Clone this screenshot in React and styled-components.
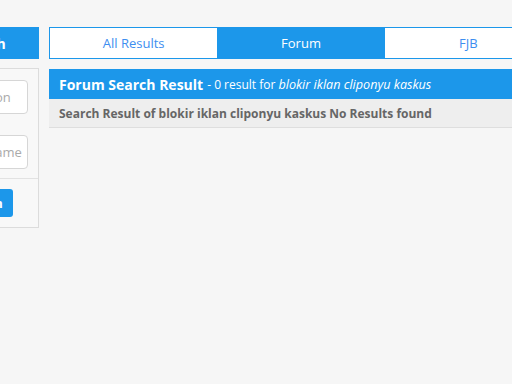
import React from 'react';
import styled, { createGlobalStyle } from 'styled-components';

const BLUE = '#1c97ea';

const GlobalStyle = createGlobalStyle`
  html, body {
    margin: 0;
    padding: 0;
    background: #f6f6f6;
    font-family: 'Open Sans', 'DejaVu Sans', sans-serif;
  }
  body {
    width: 512px;
    height: 384px;
    overflow: hidden;
  }
`;

const Page = styled.div`
  display: flex;
  gap: 10px;
  align-items: flex-start;
  margin-left: -65px;
  padding-top: 27px;
  width: 640px;
`;

const Sidebar = styled.aside`
  width: 104px;
  flex-shrink: 0;
  display: flex;
  flex-direction: column;
  gap: 9px;
`;

const SideTitle = styled.div`
  height: 32px;
  background: ${BLUE};
  color: #fff;
  font-weight: 700;
  font-size: 14px;
  display: flex;
  align-items: center;
  justify-content: center;
  padding-right: 10px;
`;

const FilterBox = styled.form`
  border: 1px solid #dcdcdc;
  background: #f8f8f8;
  display: flex;
  flex-direction: column;
`;

const Fields = styled.div`
  display: flex;
  flex-direction: column;
  gap: 21px;
  padding: 11px 10px 9px;
  border-bottom: 1px solid #e2e2e2;
`;

const Input = styled.input`
  box-sizing: border-box;
  width: 100%;
  height: 34px;
  border: 1px solid #d6d6d6;
  border-radius: 4px;
  background: #fff;
  padding: 0 4px 0 12px;
  font-family: inherit;
  font-size: 13px;
  color: #555;
  &::placeholder {
    color: #aaa;
  }
`;

const Footer = styled.div`
  display: flex;
  justify-content: flex-start;
  padding: 10px 13px;
`;

const SearchButton = styled.button`
  height: 28px;
  padding: 0 10px;
  border: 0;
  border-radius: 3px;
  background: ${BLUE};
  color: #fff;
  font-family: inherit;
  font-weight: 700;
  font-size: 13px;
`;

const Main = styled.main`
  width: 504px;
  flex-shrink: 0;
  display: flex;
  flex-direction: column;
  gap: 10px;
`;

const Tabs = styled.nav`
  display: grid;
  grid-template-columns: repeat(3, 1fr);
  border: 1px solid ${BLUE};
  height: 30px;
`;

const Tab = styled.a`
  display: flex;
  align-items: center;
  justify-content: center;
  font-size: 13px;
  background: ${(p) => (p.$active ? BLUE : '#fff')};
  color: ${(p) => (p.$active ? '#fff' : '#3d8ef0')};
`;

const Panel = styled.section`
  display: flex;
  flex-direction: column;
`;

const PanelHead = styled.div`
  height: 30px;
  background: ${BLUE};
  color: #fff;
  padding: 0 10px;
  display: flex;
  align-items: center;
  white-space: nowrap;
  font-size: 12px;
`;

const HeadTitle = styled.strong`
  font-size: 14px;
  font-weight: 700;
  margin-right: 4px;
`;

const Query = styled.em`
  margin-left: 3px;
  font-size: 12.6px;
`;

const PanelSub = styled.div`
  height: 28px;
  background: #eeeeee;
  border-bottom: 1px solid #dedede;
  padding: 0 10px;
  display: flex;
  align-items: center;
  color: #666;
  font-size: 12px;
  font-weight: 700;
  white-space: nowrap;
`;

export default function App() {
  return (
    <>
      <GlobalStyle />
      <Page>
        <Sidebar>
          <SideTitle>Search</SideTitle>
          <FilterBox>
            <Fields>
              <Input placeholder="Location" />
              <Input placeholder="Username" />
            </Fields>
            <Footer>
              <SearchButton type="button">Search</SearchButton>
            </Footer>
          </FilterBox>
        </Sidebar>
        <Main>
          <Tabs>
            <Tab>All Results</Tab>
            <Tab $active>Forum</Tab>
            <Tab>FJB</Tab>
          </Tabs>
          <Panel>
            <PanelHead>
              <HeadTitle>Forum Search Result</HeadTitle> - 0 result for
              <Query>blokir iklan cliponyu kaskus</Query>
            </PanelHead>
            <PanelSub>
              Search Result of blokir iklan cliponyu kaskus No Results found
            </PanelSub>
          </Panel>
        </Main>
      </Page>
    </>
  );
}
